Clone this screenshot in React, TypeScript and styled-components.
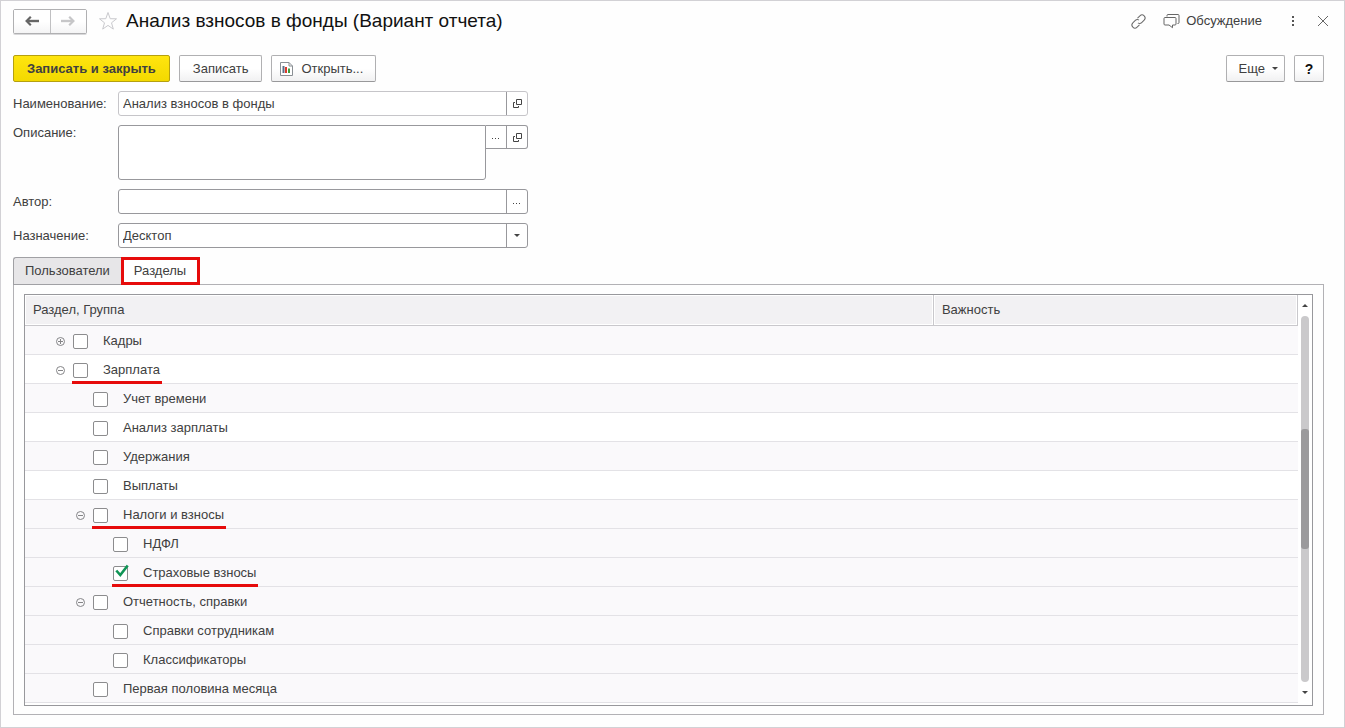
import React, { useState } from 'react';
import styled, { createGlobalStyle, css } from 'styled-components';

const c = {
  text: '#404040',
  line: '#a0a0a4',
  field: '#98989c',
  soft: '#c6c5c9',
  rule: '#e3e2e6',
  red: '#e60b0b',
};

const GlobalStyle = createGlobalStyle`
  *, *::before, *::after { box-sizing: border-box; }
  body {
    margin: 0;
    background: #fff;
    color: ${c.text};
    font: 13px/16px "Liberation Sans", Arial, sans-serif;
  }
  button, input, textarea, select {
    font: inherit;
    color: inherit;
    margin: 0;
  }
`;

const Window = styled.main`
  min-height: 100vh;
  padding: 8px 20px 12px 12px;
  border: 1px solid #d2d1d5;
  background: #fefefe;
`;

const TitleBar = styled.header`
  display: flex;
  align-items: center;
  height: 24px;
`;

const NavGroup = styled.div`
  display: flex;
  width: 74px;
  height: 25px;
  border: 1px solid #b0b0b2;
  border-radius: 2px;
  box-shadow: 0 1px 0 #d8d8da;
`;

const NavButton = styled.button`
  flex: 1;
  display: grid;
  place-items: center;
  padding: 0;
  border: 0;
  background: linear-gradient(#fff 50%, #f4f4f5);
  color: #666;
  & + & { border-left: 1px solid #c0c0c2; }
  &:disabled { color: #c6c6c8; }
`;

const IconButton = styled.button`
  display: grid;
  place-items: center;
  padding: 0;
  border: 0;
  background: none;
  color: #6a6a6a;
`;

const StarButton = styled(IconButton)`
  margin: 0 8px 0 11px;
  color: #c9c9cd;
`;

const MenuButton = styled(IconButton)`
  margin-right: 6px;
`;

const Title = styled.h1`
  margin: 0;
  font-size: 19px;
  line-height: 24px;
  font-weight: 400;
  color: #111;
`;

const WindowActions = styled.div`
  display: flex;
  align-items: center;
  gap: 16px;
  margin-left: auto;
  margin-right: -5px;
`;

const DiscussButton = styled.button`
  display: flex;
  align-items: center;
  gap: 6px;
  margin-right: 13px;
  padding: 0;
  border: 0;
  background: none;
`;

const Toolbar = styled.div`
  display: flex;
  align-items: center;
  gap: 9px;
  margin: 22px 0 9px;
`;

const Spacer = styled.div`
  flex: 1;
`;

const ToolButton = styled.button<{ $primary?: boolean }>`
  display: flex;
  align-items: center;
  gap: 8px;
  height: 27px;
  padding: 0 13px;
  border: 1px solid #b0b0b2;
  border-bottom-color: #98989a;
  border-radius: 2px;
  background: linear-gradient(#fff 50%, #f1f1f2);
  ${(p) =>
    p.$primary &&
    css`
      border-color: #b5a010;
      background: linear-gradient(#ffe50f, #f3d900);
      font-weight: 700;
    `}
`;

const OpenButton = styled(ToolButton)`
  padding: 0 12px 0 8px;
`;

const MoreButton = styled(ToolButton)`
  gap: 7px;
  padding: 0 6px 0 12px;
`;

const HelpButton = styled(ToolButton)`
  width: 30px;
  justify-content: center;
  padding: 0;
  font-size: 14px;
  font-weight: 700;
  color: #111;
`;

const Caret = styled.span<{ $up?: boolean }>`
  border: 3px solid transparent;
  ${(p) => (p.$up ? 'border-top: 0; border-bottom-color: #444;' : 'border-bottom: 0; border-top-color: #444;')}
`;

const Form = styled.div`
  display: grid;
  grid-template-columns: 105px 410px;
  row-gap: 9px;
`;

const Label = styled.label`
  line-height: 16px;
  padding-top: 5px;
`;

const TopLabel = styled(Label)`
  padding-top: 0;
`;

const Field = styled.div<{ $soft?: boolean }>`
  display: flex;
  height: 25px;
  border: 1px solid ${(p) => (p.$soft ? c.soft : c.field)};
  border-radius: 3px;
  background: #fff;
`;

const controlStyle = css`
  flex: 1;
  min-width: 0;
  padding: 0 4px;
  border: 0;
  background: none;
  outline: none;
  appearance: none;
`;

const TextInput = styled.input`
  ${controlStyle}
`;

const Select = styled.select`
  ${controlStyle}
`;

const FieldButton = styled.button`
  display: grid;
  place-items: center;
  width: 21px;
  padding: 0;
  border: 0;
  border-left: 1px solid ${c.field};
  background: none;
`;

const TextAreaField = styled.div`
  display: flex;
  align-items: flex-start;
`;

const TextArea = styled.textarea`
  flex: 1;
  height: 55px;
  padding: 4px;
  border: 1px solid ${c.field};
  border-radius: 3px 0 3px 3px;
  background: #fff;
  outline: none;
  resize: none;
`;

const AttachedButtons = styled.div`
  display: flex;
  height: 24px;
  border: 1px solid ${c.field};
  border-left: 0;
  border-radius: 0 3px 3px 0;
  background: #fff;
  ${FieldButton}:first-child { width: 20px; border-left: 0; }
`;

const Tabs = styled.div`
  display: flex;
  margin-top: 9px;
`;

const Tab = styled.button<{ $active?: boolean }>`
  height: 28px;
  padding: 0 11px 1px 11px;
  border: 1px solid ${c.line};
  border-right: 0;
  border-radius: 3px 0 0 0;
  background: #e7e6e8;
  ${(p) =>
    p.$active &&
    css`
      padding: 0 11px 1px 10px;
      border: 3px solid ${c.red};
      border-radius: 0;
      background: #fff;
    `}
`;

const Panel = styled.section`
  margin-top: -1px;
  padding: 9px 10px 8px;
  border: 1px solid #b2b1b5;
`;

const Grid = styled.div`
  display: flex;
  padding-bottom: 2px;
  border: 1px solid ${c.field};
  background: #fff;
`;

const Table = styled.table`
  flex: 1;
  border-collapse: separate;
  border-spacing: 0;
  table-layout: fixed;
`;

const HeadCell = styled.th`
  height: 31px;
  padding: 0 8px 1px;
  border-right: 1px solid #c9c8cc;
  border-bottom: 1px solid #c9c8cc;
  box-shadow: inset -1px -1px #fff, inset 1px 1px #fff;
  background: #f2f1f3;
  font-weight: 400;
  text-align: left;
  &:first-child { width: 71.4%; }
`;

const TreeRow = styled.tr<{ $shaded: boolean }>`
  background: ${(p) => (p.$shaded ? '#faf9fb' : '#fff')};
`;

const Cell = styled.td`
  height: 29px;
  padding: 0;
  border-bottom: 1px solid ${c.rule};
`;

const Node = styled.div<{ $level: number }>`
  display: flex;
  align-items: center;
  height: 28px;
  padding-top: 2px;
  padding-left: ${(p) => 28 + p.$level * 20}px;
`;

const Toggle = styled.button`
  display: grid;
  place-items: center;
  width: 15px;
  height: 15px;
  margin-right: 5px;
  padding: 0;
  border: 0;
  background: none;
  color: #858587;
`;

const TogglePlaceholder = styled.span`
  width: 20px;
`;

const NodeLabel = styled.label<{ $marked?: boolean }>`
  position: relative;
  display: flex;
  align-items: center;
  height: 28px;
  gap: 15px;
  ${(p) =>
    p.$marked &&
    css`
      &::after {
        content: '';
        position: absolute;
        left: -1px;
        right: -2px;
        bottom: 0;
        height: 3px;
        background: ${c.red};
      }
    `}
`;

const CheckBox = styled.span`
  position: relative;
  display: flex;
  margin-top: 1px;
  svg {
    position: absolute;
    left: 1px;
    top: -2px;
    display: none;
    pointer-events: none;
  }
  input:checked + svg { display: block; }
`;

const CheckInput = styled.input`
  appearance: none;
  width: 15px;
  height: 15px;
  border: 1px solid #8c8c8e;
  border-radius: 2px;
  background: #fff;
`;

const ScrollBar = styled.div`
  display: flex;
  flex-direction: column;
  align-items: center;
  width: 14px;
`;

const ScrollButton = styled.button`
  display: grid;
  place-items: center;
  width: 14px;
  height: 21px;
  padding: 0;
  border: 0;
  background: none;
`;

const Track = styled.div`
  flex: 1;
  display: flex;
  flex-direction: column;
  width: 8px;
  border-radius: 4px;
  background: #cac9cb;
`;

const TrackGap = styled.div<{ $share: number }>`
  flex: ${(p) => p.$share};
`;

const Thumb = styled.div`
  flex: 120;
  border-radius: 3px;
  background: #9b9a9c;
`;

const Arrow = ({ flip }: { flip?: boolean }) => (
  <svg width="14" height="10" viewBox="0 0 14 10" aria-hidden="true">
    <g transform={flip ? 'matrix(-1 0 0 1 14 0)' : undefined} fill="none" stroke="currentColor">
      <path d="M2 5h12" strokeWidth="2.4" />
      <path d="M5.8 .8 1.6 5l4.2 4.2" strokeWidth="2.2" />
    </g>
  </svg>
);

const Star = () => (
  <svg width="20" height="20" viewBox="0 0 20 20" fill="none" stroke="currentColor" aria-hidden="true">
    <path d="m10 1.5 2.2 6.2 6.3.1-5 4 1.8 6.3-5.3-3.7-5.3 3.7 1.8-6.3-5-4 6.3-.1z" />
  </svg>
);

const LinkIcon = () => (
  <svg width="17" height="17" viewBox="0 0 17 17" fill="none" stroke="currentColor" strokeLinecap="round" aria-hidden="true">
    <g transform="rotate(-45 8.5 8.5)">
      <path d="M6.500 11.500H3.500a3 3 0 0 1 0-6H7a3 3 0 0 1 2.800 2" />
      <path d="M10.500 5.500h3a3 3 0 0 1 0 6H10a3 3 0 0 1-2.800-2" />
    </g>
  </svg>
);

const ChatIcon = () => (
  <svg width="17" height="16" viewBox="0 0 17 16" fill="none" stroke="#666" aria-hidden="true">
    <path d="M4 3.500V2.500a1 1 0 0 1 1-1h10a1 1 0 0 1 1 1v7a1 1 0 0 1-1 1h-.5" />
    <path d="M2 4.500h10a1 1 0 0 1 1 1v5.500a1 1 0 0 1-1 1H9.500v2.700L6 12H2a1 1 0 0 1-1-1V5.500a1 1 0 0 1 1-1z" />
  </svg>
);

const DotsIcon = () => (
  <svg width="4" height="12" viewBox="0 0 4 12" fill="#555" aria-hidden="true">
    <path d="M1 1h2v2H1zM1 5h2v2H1zM1 9h2v2H1z" />
  </svg>
);

const CloseIcon = () => (
  <svg width="12" height="12" viewBox="0 0 12 12" stroke="#666" aria-hidden="true">
    <path d="m1 1 10 10M11 1 1 11" />
  </svg>
);

const ReportIcon = () => (
  <svg width="13" height="14" viewBox="0 0 13 14" aria-hidden="true">
    <path d="M.5.5h8.500l3.500 3.500v9.500H.5z" fill="#fff" stroke="#8a8f94" />
    <path d="M9 .5V4h3.500" fill="none" stroke="#8a8f94" />
    <path d="M2.500 4h2v7h-2z" fill="#5b7089" />
    <path d="M5 5h2v6H5z" fill="#dd3a2c" />
    <path d="M8 6.500h2V11H8z" fill="#3f9c3c" />
  </svg>
);

const ExpandIcon = () => (
  <svg width="9" height="9" viewBox="0 0 9 9" fill="none" stroke="#444" aria-hidden="true">
    <path d="M3.500.5h5v5h-5zM2 3.500H.5v5h5V7" />
  </svg>
);

const EllipsisIcon = () => (
  <svg width="8" height="6" viewBox="0 0 8 6" fill="#444" aria-hidden="true">
    <path d="M0 4h1v1H0zM3 4h1v1H3zM6 4h1v1H6z" />
  </svg>
);

const ToggleIcon = ({ open }: { open: boolean }) => (
  <svg width="9" height="9" viewBox="0 0 9 9" fill="none" stroke="currentColor" aria-hidden="true">
    <circle cx="4.500" cy="4.500" r="4" />
    <path d={open ? 'M2 4.500h5' : 'M2 4.500h5M4.500 2v5'} />
  </svg>
);

const CheckMark = () => (
  <svg width="16" height="14" viewBox="0 0 16 14" fill="none" stroke="#0f9455" strokeWidth="2.600" aria-hidden="true">
    <path d="m2.300 6.500 4 4.500 7.400-9.500" />
  </svg>
);

type TreeItem = {
  id: string;
  name: string;
  level: number;
  open?: boolean;
  marked?: boolean;
  shaded: boolean;
};

const items: TreeItem[] = [
  { id: 'staff', name: 'Кадры', level: 0, open: false, shaded: true },
  { id: 'salary', name: 'Зарплата', level: 0, open: true, marked: true, shaded: false },
  { id: 'time', name: 'Учет времени', level: 1, shaded: true },
  { id: 'analysis', name: 'Анализ зарплаты', level: 1, shaded: false },
  { id: 'deductions', name: 'Удержания', level: 1, shaded: true },
  { id: 'payments', name: 'Выплаты', level: 1, shaded: false },
  { id: 'taxes', name: 'Налоги и взносы', level: 1, open: true, marked: true, shaded: true },
  { id: 'ndfl', name: 'НДФЛ', level: 2, shaded: true },
  { id: 'insurance', name: 'Страховые взносы', level: 2, marked: true, shaded: true },
  { id: 'reports', name: 'Отчетность, справки', level: 1, open: true, shaded: true },
  { id: 'certificates', name: 'Справки сотрудникам', level: 2, shaded: true },
  { id: 'classifiers', name: 'Классификаторы', level: 2, shaded: true },
  { id: 'firsthalf', name: 'Первая половина месяца', level: 1, shaded: true },
];

export default function App() {
  const [checked, setChecked] = useState<Record<string, boolean>>({ insurance: true });

  return (
    <>
      <GlobalStyle />
      <Window>
        <TitleBar>
          <NavGroup>
            <NavButton type="button" aria-label="Назад"><Arrow /></NavButton>
            <NavButton type="button" aria-label="Вперед" disabled><Arrow flip /></NavButton>
          </NavGroup>
          <StarButton type="button" aria-label="В избранное"><Star /></StarButton>
          <Title>Анализ взносов в фонды (Вариант отчета)</Title>
          <WindowActions>
            <IconButton type="button" aria-label="Ссылка"><LinkIcon /></IconButton>
            <DiscussButton type="button"><ChatIcon />Обсуждение</DiscussButton>
            <MenuButton type="button" aria-label="Меню"><DotsIcon /></MenuButton>
            <IconButton type="button" aria-label="Закрыть"><CloseIcon /></IconButton>
          </WindowActions>
        </TitleBar>

        <Toolbar>
          <ToolButton type="button" $primary>Записать и закрыть</ToolButton>
          <ToolButton type="button">Записать</ToolButton>
          <OpenButton type="button"><ReportIcon />Открыть...</OpenButton>
          <Spacer />
          <MoreButton type="button">Еще <Caret /></MoreButton>
          <HelpButton type="button">?</HelpButton>
        </Toolbar>

        <Form>
          <Label htmlFor="name">Наименование:</Label>
          <Field $soft>
            <TextInput id="name" defaultValue="Анализ взносов в фонды" />
            <FieldButton type="button" aria-label="Открыть наименование"><ExpandIcon /></FieldButton>
          </Field>

          <TopLabel htmlFor="description">Описание:</TopLabel>
          <TextAreaField>
            <TextArea id="description" />
            <AttachedButtons>
              <FieldButton type="button" aria-label="Выбрать описание"><EllipsisIcon /></FieldButton>
              <FieldButton type="button" aria-label="Открыть описание"><ExpandIcon /></FieldButton>
            </AttachedButtons>
          </TextAreaField>

          <Label htmlFor="author">Автор:</Label>
          <Field>
            <TextInput id="author" />
            <FieldButton type="button" aria-label="Выбрать автора"><EllipsisIcon /></FieldButton>
          </Field>

          <Label htmlFor="purpose">Назначение:</Label>
          <Field>
            <Select id="purpose" defaultValue="desktop">
              <option value="desktop">Десктоп</option>
            </Select>
            <FieldButton type="button" aria-label="Раскрыть список"><Caret /></FieldButton>
          </Field>
        </Form>

        <Tabs role="tablist">
          <Tab type="button" role="tab" aria-selected={false}>Пользователи</Tab>
          <Tab type="button" role="tab" aria-selected $active>Разделы</Tab>
        </Tabs>

        <Panel role="tabpanel">
          <Grid>
            <Table>
              <thead>
                <tr>
                  <HeadCell scope="col">Раздел, Группа</HeadCell>
                  <HeadCell scope="col">Важность</HeadCell>
                </tr>
              </thead>
              <tbody>
                {items.map((item) => (
                  <TreeRow key={item.id} $shaded={item.shaded}>
                    <Cell>
                      <Node $level={item.level}>
                        {item.open === undefined ? (
                          <TogglePlaceholder />
                        ) : (
                          <Toggle type="button" aria-expanded={item.open} aria-label={item.name}>
                            <ToggleIcon open={item.open} />
                          </Toggle>
                        )}
                        <NodeLabel $marked={item.marked}>
                          <CheckBox>
                            <CheckInput
                              type="checkbox"
                              checked={!!checked[item.id]}
                              onChange={(e) => setChecked({ ...checked, [item.id]: e.target.checked })}
                            />
                            <CheckMark />
                          </CheckBox>
                          {item.name}
                        </NodeLabel>
                      </Node>
                    </Cell>
                    <Cell />
                  </TreeRow>
                ))}
              </tbody>
            </Table>
            <ScrollBar>
              <ScrollButton type="button" aria-label="Вверх"><Caret $up /></ScrollButton>
              <Track>
                <TrackGap $share={114} />
                <Thumb />
                <TrackGap $share={134} />
              </Track>
              <ScrollButton type="button" aria-label="Вниз"><Caret /></ScrollButton>
            </ScrollBar>
          </Grid>
        </Panel>
      </Window>
    </>
  );
}
